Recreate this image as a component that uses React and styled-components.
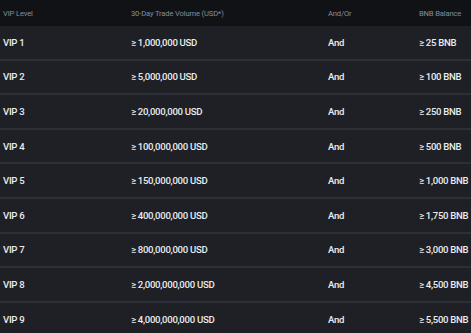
import React from "react";
import styled, { createGlobalStyle } from "styled-components";

const Global = createGlobalStyle`
  html, body { margin: 0; padding: 0; background: #1e2026; }
  body { font-family: Roboto, "Noto Sans", sans-serif; }
`;

const Table = styled.div`
  width: 471px;
  height: 333px;
  overflow: hidden;
  background: #1e2026;
  display: flex;
  flex-direction: column;
`;

const cols = `
  display: grid;
  grid-template-columns: 128px 197px 91px 1fr;
  padding-left: 3px;
  align-items: center;
`;

const Header = styled.div`
  ${cols}
  height: 26px;
  flex: none;
  background: #111216;
  color: #848e9c;
  font-size: 7.6px;
  letter-spacing: -0.15px;
`;

const Row = styled.div`
  ${cols}
  height: 32.6px;
  flex: none;
  border-bottom: 2px solid #2b2f37;
  color: #eaecef;
  font-size: 9.6px;
  font-weight: 500;
  letter-spacing: -0.3px;
  &:last-child { border-bottom: none; }
`;

const Cell = styled.div`
  white-space: nowrap;
`;

const rows = [
  ["VIP 1", "≥ 1,000,000 USD", "And", "≥ 25 BNB"],
  ["VIP 2", "≥ 5,000,000 USD", "And", "≥ 100 BNB"],
  ["VIP 3", "≥ 20,000,000 USD", "And", "≥ 250 BNB"],
  ["VIP 4", "≥ 100,000,000 USD", "And", "≥ 500 BNB"],
  ["VIP 5", "≥ 150,000,000 USD", "And", "≥ 1,000 BNB"],
  ["VIP 6", "≥ 400,000,000 USD", "And", "≥ 1,750 BNB"],
  ["VIP 7", "≥ 800,000,000 USD", "And", "≥ 3,000 BNB"],
  ["VIP 8", "≥ 2,000,000,000 USD", "And", "≥ 4,500 BNB"],
  ["VIP 9", "≥ 4,000,000,000 USD", "And", "≥ 5,500 BNB"],
];

export default function App() {
  return (
    <>
      <Global />
      <Table>
        <Header>
          <Cell>VIP Level</Cell>
          <Cell>30-Day Trade Volume (USD*)</Cell>
          <Cell>And/Or</Cell>
          <Cell>BNB Balance</Cell>
        </Header>
        {rows.map((r) => (
          <Row key={r[0]}>
            {r.map((c, i) => (
              <Cell key={i}>{c}</Cell>
            ))}
          </Row>
        ))}
      </Table>
    </>
  );
}
